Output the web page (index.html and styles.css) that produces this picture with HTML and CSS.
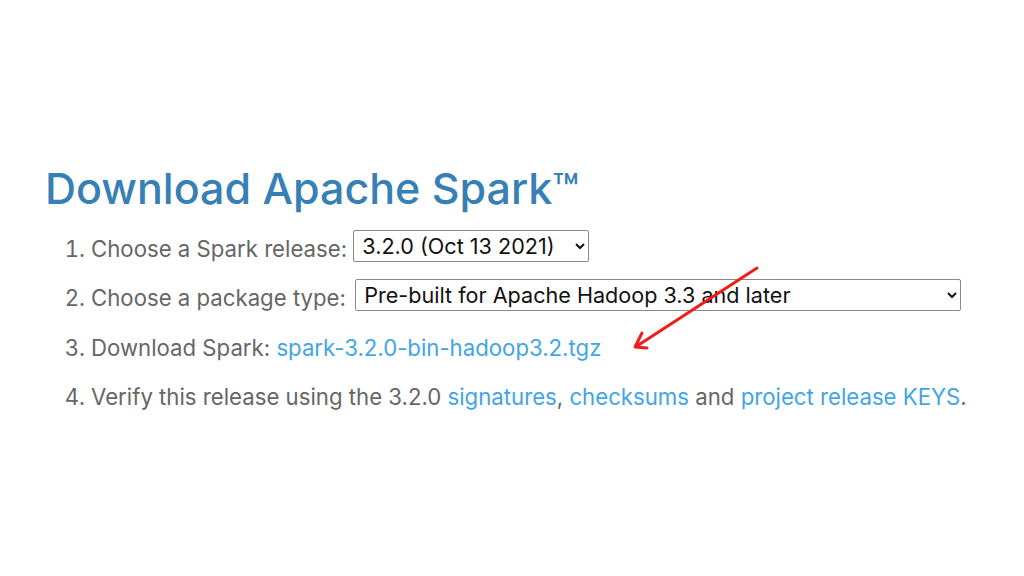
FILE: index.html
```html
<!DOCTYPE html>
<html>
<head>
<meta charset="utf-8">
<link rel="stylesheet" href="styles.css">
</head>
<body>
<div class="page">
  <h1 class="title">Download Apache Spark™</h1>
  <ol class="steps">
    <li>Choose a Spark release: <select class="sel sel-release"><option>3.2.0 (Oct 13 2021)</option></select></li>
    <li>Choose a package type: <select class="sel sel-package"><option>Pre-built for Apache Hadoop 3.3 and later</option></select></li>
    <li>Download Spark: <a class="link" href="#">spark-3.2.0-bin-hadoop3.2.tgz</a></li>
    <li>Verify this release using the 3.2.0 <a class="link" href="#">signatures</a>, <a class="link" href="#">checksums</a> and <a class="link" href="#">project release KEYS</a>.</li>
  </ol>
  <svg class="arrow" width="1024" height="576" viewBox="0 0 1024 576">
    <line x1="757" y1="268" x2="637" y2="346" stroke="#f21b1b" stroke-width="3" stroke-linecap="round"/>
    <polyline points="642,333 635,347 647,348" fill="none" stroke="#f21b1b" stroke-width="3" stroke-linecap="round" stroke-linejoin="round"/>
  </svg>
</div>
</body>
</html>
```
FILE: styles.css
```css
html, body {
  margin: 0;
  padding: 0;
  background: #ffffff;
}
.page {
  position: relative;
  width: 1024px;
  height: 576px;
  padding: 158px 0 0 45px;
  box-sizing: border-box;
  font-family: Inter, "Noto Sans", sans-serif;
}
.title {
  margin: 0;
  font-size: 43px;
  font-weight: 500;
  line-height: 60px;
  color: #3680b5;
  letter-spacing: 0;
}
.steps {
  margin: 6px 0 0 0;
  padding-left: 46px;
  font-size: 22.2px;
  color: #666666;
}
.steps li {
  line-height: 49.3px;
  height: 49.3px;
}
.link {
  color: #42a5e6;
  text-decoration: none;
}
.sel {
  font-family: inherit;
  font-size: 21.6px;
  color: #111;
  height: 32px;
  border: 1px solid #8a8a8a;
  border-radius: 2px;
  background: #fff;
  padding: 0 4px;
  vertical-align: 3px;
}
.sel-release { width: 236px; }
.sel-package { width: 606px; margin-left: 3px; }
.arrow {
  position: absolute;
  left: 0;
  top: 0;
  pointer-events: none;
}
```
